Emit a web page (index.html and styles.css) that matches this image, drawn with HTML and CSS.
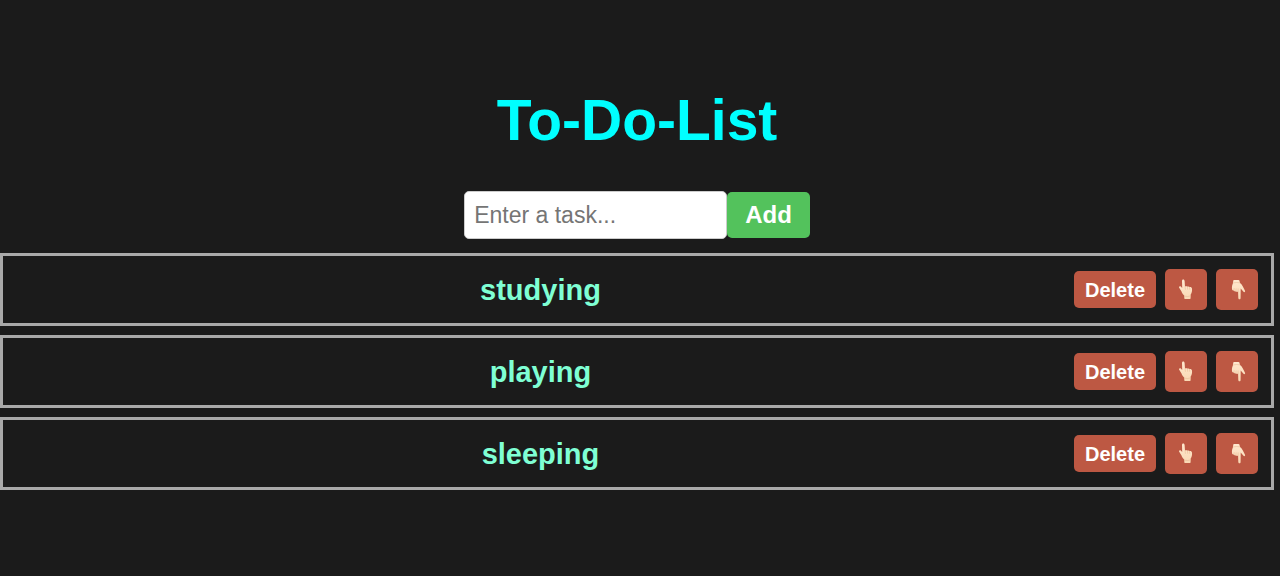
FILE: index.html
```html
<!DOCTYPE html>
<html lang="en">
<head>
<meta charset="utf-8">
<meta name="viewport" content="width=device-width, initial-scale=1">
<title>To-Do-List</title>
<link rel="stylesheet" href="styles.css">
</head>
<body>
<svg width="0" height="0" class="sprite" aria-hidden="true">
  <defs>
    <linearGradient id="skin" x1="0" y1="0" x2="0" y2="1">
      <stop offset="0" stop-color="#ffe9cf"/>
      <stop offset="1" stop-color="#f9d8b4"/>
    </linearGradient>
    <symbol id="hand-up" viewBox="0 0 20 20">
      <path fill="url(#skin)" d="M7.2 0C8.1 0 8.5.6 8.6 1.5L9 7.1C10 6.6 11 6.6 11.5 7.2C12.2 6.8 13.1 6.9 13.6 7.5C14.7 7.2 15.9 7.9 16 9.2C16.2 11.3 15.9 13.3 14.7 15L14.6 18.7Q14.6 19.4 14 19.4H8.9Q8.3 19.4 8.3 18.8L8.2 16C6.7 14.7 5.9 13.4 5.5 12L3.2 8.3C2.5 7.1 3.8 6.1 4.8 7L6.2 8.6L6 1.6C6 .6 6.4 0 7.2 0Z"/>
      <path fill="none" stroke="#e3b48c" stroke-width=".5" stroke-linecap="round" d="M9.1 7.3L9.4 9.8M11.5 7.5L11.7 9.8M13.6 7.8L13.7 9.8M8.4 16.7Q11.5 17.5 14.5 16.5"/>
    </symbol>
    <symbol id="hand-down" viewBox="0 0 20 20">
      <path fill="url(#skin)" d="M7 .4H11.5Q12.2.4 12.4 1L13 3.4C14.3 4.2 15.2 5.4 15.7 6.8L18 11.3C18.5 12.4 17.3 13.2 16.5 12.3L13.7 9.1L13.6 18.4C13.6 19.3 13.2 19.8 12.5 19.8S11.4 19.3 11.3 18.4L11.1 12C10.4 12.6 9.4 12.5 9 11.8C8.2 12.2 7.3 11.9 7 11.1C5.9 11.1 5.1 10.4 5 9.4C4.8 7.5 5.1 5.3 5.9 3.9L6.3 1Q6.4.4 7 .4Z"/>
      <path fill="none" stroke="#e3b48c" stroke-width=".5" stroke-linecap="round" d="M11.1 11.9V9.4M8.9 11.5L9.1 9.3M6.9 10.8L7.1 9M6.2 3.4Q9.5 2.6 12.8 3.3"/>
    </symbol>
  </defs>
</svg>
<main class="todo">
  <h1 class="title">To-Do-List</h1>
  <form class="task-form">
    <input class="task-input" type="text" placeholder="Enter a task..." aria-label="Task">
    <button class="add-button" type="button">Add</button>
  </form>
  <ol class="task-list">
    <li class="task">
      <span class="task-text">studying</span>
      <button class="task-button" type="button">Delete</button>
      <button class="task-button move-button" type="button" aria-label="Move up"><svg class="hand"><use href="#hand-up"/></svg></button>
      <button class="task-button move-button" type="button" aria-label="Move down"><svg class="hand"><use href="#hand-down"/></svg></button>
    </li>
    <li class="task">
      <span class="task-text">playing</span>
      <button class="task-button" type="button">Delete</button>
      <button class="task-button move-button" type="button" aria-label="Move up"><svg class="hand"><use href="#hand-up"/></svg></button>
      <button class="task-button move-button" type="button" aria-label="Move down"><svg class="hand"><use href="#hand-down"/></svg></button>
    </li>
    <li class="task">
      <span class="task-text">sleeping</span>
      <button class="task-button" type="button">Delete</button>
      <button class="task-button move-button" type="button" aria-label="Move up"><svg class="hand"><use href="#hand-up"/></svg></button>
      <button class="task-button move-button" type="button" aria-label="Move down"><svg class="hand"><use href="#hand-down"/></svg></button>
    </li>
  </ol>
</main>
</body>
</html>
```
FILE: styles.css
```css
* {
  box-sizing: border-box;
}

body {
  margin: 0;
  background: #1b1b1b;
  font-family: "Liberation Sans", Arial, sans-serif;
}

.sprite {
  position: absolute;
}

.todo {
  padding: 87px 6px 0 0;
  text-align: center;
}

.title {
  margin: 0 0 38px;
  color: cyan;
  font-size: 57px;
  line-height: 66px;
}

.task-form {
  display: flex;
  justify-content: center;
  align-items: center;
  margin-bottom: 14px;
}

.task-input {
  width: 263px;
  height: 48px;
  padding: 0 9px;
  border: 1px solid #ccc;
  border-radius: 5px;
  background: #fff;
  color: #222;
  font: 23px "Liberation Sans", Arial, sans-serif;
}

.task-input::placeholder {
  color: #757575;
}

.add-button {
  padding: 9px 18px;
  border: 0;
  border-radius: 5px;
  background: #53c25c;
  color: #fff;
  font: bold 24px/28px "Liberation Sans", Arial, sans-serif;
}

.task-list {
  display: flex;
  flex-direction: column;
  gap: 9px;
  margin: 0;
  padding: 0;
  list-style: none;
}

.task {
  display: flex;
  align-items: center;
  gap: 9px;
  padding: 13px;
  border: 3px solid #a9a9a9;
}

.task-text {
  flex: 1;
  padding-top: 2px;
  color: aquamarine;
  font-size: 29px;
  font-weight: bold;
  line-height: 33px;
}

.task-button {
  padding: 8px 11px 6px;
  border: 0;
  border-radius: 5px;
  background: #bd5843;
  color: #fff;
  font: bold 20px/23px "Liberation Sans", Arial, sans-serif;
}

.move-button {
  padding: 10px 11px;
}

.hand {
  display: block;
  width: 20px;
  height: 21px;
}
```
